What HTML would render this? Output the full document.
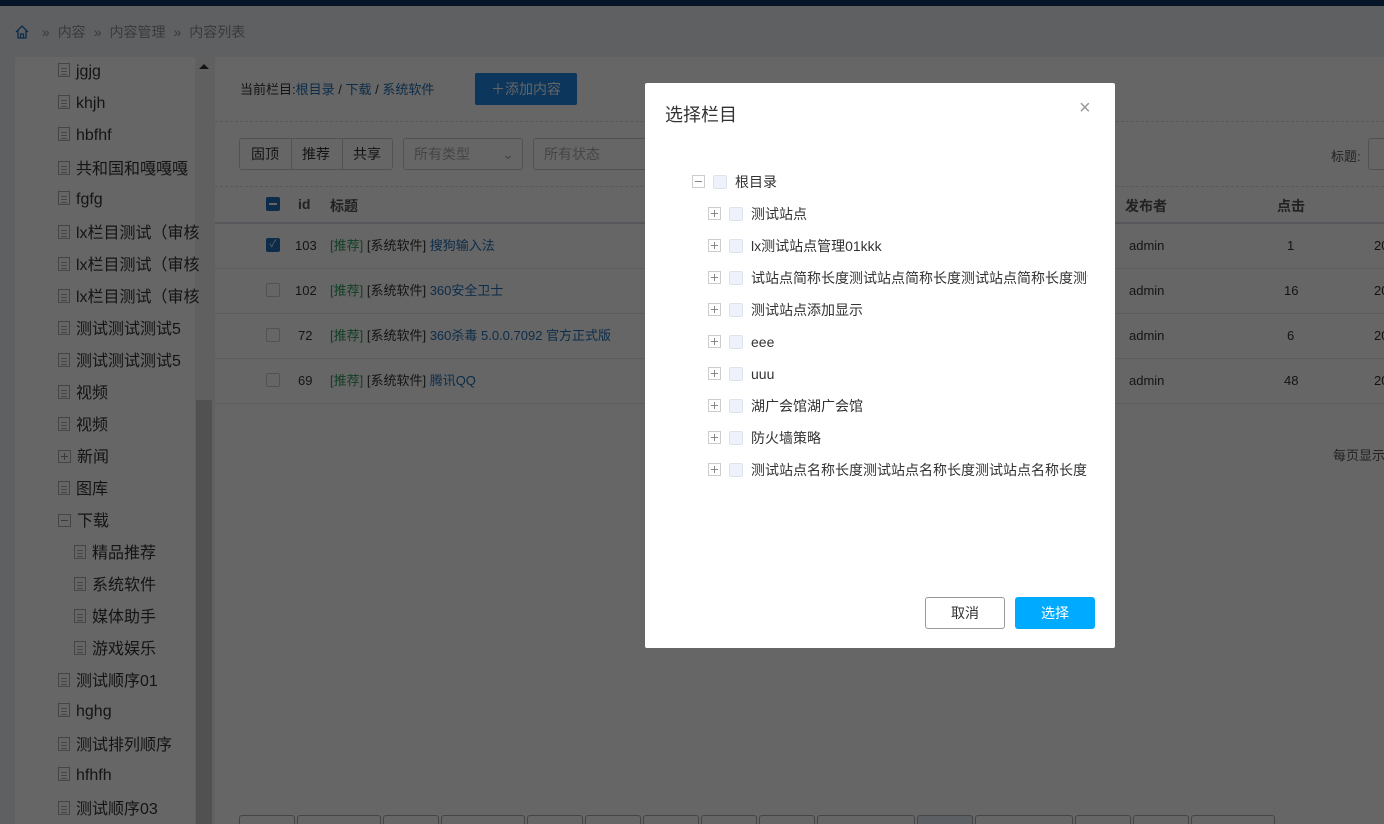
<!DOCTYPE html>
<html><head><meta charset="utf-8"><style>
*{box-sizing:border-box;margin:0;padding:0}
html,body{width:1384px;height:824px;overflow:hidden}
body{position:relative;background:#5f6062;font-family:"Liberation Sans","Noto Sans CJK SC",sans-serif;color:#141414;font-size:14px}
.a{position:absolute;white-space:nowrap}
.top{left:0;top:0;width:1384px;height:6px;background:#061428}
.side{left:15px;top:57px;width:180px;height:767px;background:#666;overflow:hidden}
.sb{left:195px;top:57px;width:18px;height:767px;background:#606060}
.thumb{left:196px;top:400px;width:16px;height:424px;background:#515151}
.main{left:215px;top:57px;width:1169px;height:767px;background:#666}
.it{font-size:16px;color:#141414;line-height:20px}
.doc{display:inline-block;width:12px;height:14px;border:1px solid #454545;margin-right:6px;vertical-align:-1px;position:relative;background:linear-gradient(#454545,#454545) 2px 4px/6px 1px no-repeat,linear-gradient(#454545,#454545) 2px 7px/6px 1px no-repeat,linear-gradient(#454545,#454545) 2px 10px/6px 1px no-repeat}
.bx{display:inline-block;width:13px;height:13px;border:1px solid #454545;position:relative;vertical-align:-1px}
.bx.p:before,.bx.m:before{content:"";position:absolute;left:2px;top:5px;width:7px;height:1px;background:#3a3a3a}
.bx.p:after{content:"";position:absolute;left:5px;top:2px;width:1px;height:7px;background:#3a3a3a}
.md .bx{border-color:#ccc}
.md .bx.p:before,.md .bx.m:before,.md .bx.p:after{background:#888}
.cb{display:inline-block;width:14px;height:14px;border:1px solid #dde3ee;background:#eef2fa;border-radius:2px}
.modal{left:645px;top:83px;width:470px;height:565px;background:#fff;border-radius:2px;color:#333}
.btn{height:32px;border-radius:3px;font-size:14px;text-align:center;line-height:30px}
.pg{top:815px;height:9px;border:1px solid #454545;border-bottom:none;border-radius:3px 3px 0 0;background:#666}
.tcell{font-size:13px;line-height:16px}
.md .row{font-size:14px;line-height:20px}
</style></head><body>
<div class="a top"></div>
<div class="a" style="left:14px;top:22px;font-size:14px;color:#3a3a3a">
<svg width="16" height="16" viewBox="0 0 16 16" style="vertical-align:-3px"><path d="M2 8 L8 2 L14 8 M4 6.5 V14 H12 V6.5 M6.5 14 V10 H9.5 V14" fill="none" stroke="#0c2c4a" stroke-width="1.3"/></svg>
<span style="margin:0 8px">»</span>内容<span style="margin:0 8px">»</span>内容管理<span style="margin:0 8px">»</span>内容列表</div>
<div class="a side"></div>
<div class="a sb"></div>
<div class="a" style="left:199px;top:64px;width:0;height:0;border-left:5px solid transparent;border-right:5px solid transparent;border-bottom:5px solid #141414"></div>
<div class="a thumb"></div>
<div class="a main"></div>

<div class="a it" style="left:58px;top:62px"><span class="doc"></span>jgjg</div>
<div class="a it" style="left:58px;top:94px"><span class="doc"></span>khjh</div>
<div class="a it" style="left:58px;top:126px"><span class="doc"></span>hbfhf</div>
<div class="a it" style="left:58px;top:160px"><span class="doc"></span>共和国和嘎嘎嘎</div>
<div class="a it" style="left:58px;top:190px"><span class="doc"></span>fgfg</div>
<div class="a it" style="left:58px;top:224px"><span class="doc"></span>lx栏目测试（审核</div>
<div class="a it" style="left:58px;top:256px"><span class="doc"></span>lx栏目测试（审核</div>
<div class="a it" style="left:58px;top:288px"><span class="doc"></span>lx栏目测试（审核</div>
<div class="a it" style="left:58px;top:320px"><span class="doc"></span>测试测试测试5</div>
<div class="a it" style="left:58px;top:352px"><span class="doc"></span>测试测试测试5</div>
<div class="a it" style="left:58px;top:384px"><span class="doc"></span>视频</div>
<div class="a it" style="left:58px;top:416px"><span class="doc"></span>视频</div>
<div class="a it" style="left:58px;top:448px"><span class="bx p" style="margin-right:6px"></span>新闻</div>
<div class="a it" style="left:58px;top:480px"><span class="doc"></span>图库</div>
<div class="a it" style="left:58px;top:512px"><span class="bx m" style="margin-right:6px"></span>下载</div>
<div class="a it" style="left:74px;top:544px"><span class="doc"></span>精品推荐</div>
<div class="a it" style="left:74px;top:576px"><span class="doc"></span>系统软件</div>
<div class="a it" style="left:74px;top:608px"><span class="doc"></span>媒体助手</div>
<div class="a it" style="left:74px;top:640px"><span class="doc"></span>游戏娱乐</div>
<div class="a it" style="left:58px;top:672px"><span class="doc"></span>测试顺序01</div>
<div class="a it" style="left:58px;top:702px"><span class="doc"></span>hghg</div>
<div class="a it" style="left:58px;top:736px"><span class="doc"></span>测试排列顺序</div>
<div class="a it" style="left:58px;top:766px"><span class="doc"></span>hfhfh</div>
<div class="a it" style="left:58px;top:800px"><span class="doc"></span>测试顺序03</div>

<div class="a" style="left:240px;top:82px;font-size:13px;line-height:16px">当前栏目:<span style="color:#0c2c4a">根目录</span> / <span style="color:#0c2c4a">下载</span> / <span style="color:#0c2c4a">系统软件</span></div>
<div class="a" style="left:475px;top:73px;width:102px;height:32px;background:#0c365c;color:#666;border-radius:2px;font-size:14px;line-height:32px;text-align:center">＋添加内容</div>
<div class="a" style="left:215px;top:121px;width:1169px;border-top:1px dashed #585858"></div>
<div class="a" style="left:239px;top:138px;width:154px;height:32px;border:1px solid #525252;border-radius:3px;font-size:14px;line-height:30px"><span style="position:absolute;left:11px">固顶</span><span style="position:absolute;left:51px;top:0;height:30px;border-left:1px solid #525252"></span><span style="position:absolute;left:62px">推荐</span><span style="position:absolute;left:102px;top:0;height:30px;border-left:1px solid #525252"></span><span style="position:absolute;left:113px">共享</span></div>
<div class="a" style="left:403px;top:138px;width:120px;height:32px;border:1px solid #525252;border-radius:3px;color:#454545;line-height:30px;padding-left:10px">所有类型<span style="position:absolute;right:8px">⌄</span></div>
<div class="a" style="left:533px;top:138px;width:120px;height:32px;border:1px solid #525252;border-radius:3px;color:#454545;line-height:30px;padding-left:10px">所有状态</div>
<div class="a" style="left:1331px;top:146px;font-size:13px;color:#222">标题:</div>
<div class="a" style="left:1368px;top:138px;width:30px;height:32px;border:1px solid #525252;border-radius:3px"></div>
<div class="a" style="left:215px;top:186px;width:1169px;border-top:1px dashed #585858"></div>
<div class="a" style="left:215px;top:222px;width:1169px;border-top:2px solid #58585c"></div>
<div class="a" style="left:266px;top:197px;width:14px;height:14px;background:#0c2c4a;border-radius:2px"><div style="margin:6px 3px;height:2px;background:#666"></div></div>
<div class="a" style="left:298px;top:196px;font-weight:bold;color:#222">id</div>
<div class="a" style="left:330px;top:196px;font-weight:bold;color:#222">标题</div>
<div class="a" style="left:1125px;top:196px;font-weight:bold;color:#222">发布者</div>
<div class="a" style="left:1277px;top:196px;font-weight:bold;color:#222">点击</div>

<div class="a" style="left:215px;top:268px;width:1169px;border-top:1px solid #5c5c5c"></div>
<div class="a" style="left:215px;top:313px;width:1169px;border-top:1px solid #5c5c5c"></div>
<div class="a" style="left:215px;top:358px;width:1169px;border-top:1px solid #5c5c5c"></div>
<div class="a" style="left:215px;top:403px;width:1169px;border-top:1px solid #5c5c5c"></div>

<div class="a" style="left:266px;top:238px;width:14px;height:14px;background:#0c2c4a;border-radius:2px;color:#666;font-size:10px;line-height:14px;text-align:center">✓</div>
<div class="a" style="left:266px;top:283px;width:14px;height:14px;border:1px solid #525252;border-radius:2px"></div>
<div class="a" style="left:266px;top:328px;width:14px;height:14px;border:1px solid #525252;border-radius:2px"></div>
<div class="a" style="left:266px;top:373px;width:14px;height:14px;border:1px solid #525252;border-radius:2px"></div>
<div class="a tcell" style="left:295px;top:238px">103</div>
<div class="a tcell" style="left:295px;top:283px">102</div>
<div class="a tcell" style="left:298px;top:328px">72</div>
<div class="a tcell" style="left:298px;top:373px">69</div>
<div class="a tcell" style="left:330px;top:238px"><span style="color:#113e24">[推荐]</span> [系统软件] <span style="color:#0c2c4a">搜狗输入法</span></div>
<div class="a tcell" style="left:330px;top:283px"><span style="color:#113e24">[推荐]</span> [系统软件] <span style="color:#0c2c4a">360安全卫士</span></div>
<div class="a tcell" style="left:330px;top:328px"><span style="color:#113e24">[推荐]</span> [系统软件] <span style="color:#0c2c4a">360杀毒 5.0.0.7092 官方正式版</span></div>
<div class="a tcell" style="left:330px;top:373px"><span style="color:#113e24">[推荐]</span> [系统软件] <span style="color:#0c2c4a">腾讯QQ</span></div>
<div class="a tcell" style="left:1129px;top:238px">admin</div>
<div class="a tcell" style="left:1129px;top:283px">admin</div>
<div class="a tcell" style="left:1129px;top:328px">admin</div>
<div class="a tcell" style="left:1129px;top:373px">admin</div>
<div class="a tcell" style="left:1287px;top:238px">1</div>
<div class="a tcell" style="left:1284px;top:283px">16</div>
<div class="a tcell" style="left:1287px;top:328px">6</div>
<div class="a tcell" style="left:1284px;top:373px">48</div>
<div class="a tcell" style="left:1374px;top:238px">20</div>
<div class="a tcell" style="left:1374px;top:283px">20</div>
<div class="a tcell" style="left:1374px;top:328px">20</div>
<div class="a tcell" style="left:1374px;top:373px">20</div>
<div class="a" style="left:1333px;top:445px;font-size:13px;color:#222">每页显示</div>

<div class="a pg" style="left:239px;width:56px"></div>
<div class="a pg" style="left:297px;width:84px"></div>
<div class="a pg" style="left:383px;width:56px"></div>
<div class="a pg" style="left:441px;width:84px"></div>
<div class="a pg" style="left:527px;width:56px"></div>
<div class="a pg" style="left:585px;width:56px"></div>
<div class="a pg" style="left:643px;width:56px"></div>
<div class="a pg" style="left:701px;width:56px"></div>
<div class="a pg" style="left:759px;width:56px"></div>
<div class="a pg" style="left:817px;width:98px"></div>
<div class="a pg" style="left:917px;width:56px;background:#5c5f63"></div>
<div class="a pg" style="left:975px;width:98px"></div>
<div class="a pg" style="left:1075px;width:56px"></div>
<div class="a pg" style="left:1133px;width:56px"></div>
<div class="a pg" style="left:1191px;width:84px"></div>

<div class="a modal md">
<div class="a" style="left:20px;top:20px;font-size:18px;color:#333;line-height:24px">选择栏目</div>
<div class="a" style="left:434px;top:14px;font-size:20px;color:#999;font-weight:300">×</div>
<div class="a row" style="left:47px;top:89px"><span class="bx m"></span><span class="cb" style="margin:0 8px;vertical-align:-2px"></span>根目录</div>
<div class="a row" style="left:63px;top:121px"><span class="bx p"></span><span class="cb" style="margin:0 8px;vertical-align:-2px"></span>测试站点</div>
<div class="a row" style="left:63px;top:153px"><span class="bx p"></span><span class="cb" style="margin:0 8px;vertical-align:-2px"></span>lx测试站点管理01kkk</div>
<div class="a row" style="left:63px;top:185px;width:380px;overflow:hidden"><span class="bx p"></span><span class="cb" style="margin:0 8px;vertical-align:-2px"></span>试站点简称长度测试站点简称长度测试站点简称长度测试</div>
<div class="a row" style="left:63px;top:217px"><span class="bx p"></span><span class="cb" style="margin:0 8px;vertical-align:-2px"></span>测试站点添加显示</div>
<div class="a row" style="left:63px;top:249px"><span class="bx p"></span><span class="cb" style="margin:0 8px;vertical-align:-2px"></span>eee</div>
<div class="a row" style="left:63px;top:281px"><span class="bx p"></span><span class="cb" style="margin:0 8px;vertical-align:-2px"></span>uuu</div>
<div class="a row" style="left:63px;top:313px"><span class="bx p"></span><span class="cb" style="margin:0 8px;vertical-align:-2px"></span>湖广会馆湖广会馆</div>
<div class="a row" style="left:63px;top:345px"><span class="bx p"></span><span class="cb" style="margin:0 8px;vertical-align:-2px"></span>防火墙策略</div>
<div class="a row" style="left:63px;top:377px;width:380px;overflow:hidden"><span class="bx p"></span><span class="cb" style="margin:0 8px;vertical-align:-2px"></span>测试站点名称长度测试站点名称长度测试站点名称长度</div>
<div class="a btn" style="left:280px;top:514px;width:80px;border:1px solid #999;color:#333">取消</div>
<div class="a btn" style="left:370px;top:514px;width:80px;background:#00aaff;color:#fff;border:1px solid #00aaff">选择</div>
</div>
</body></html>
